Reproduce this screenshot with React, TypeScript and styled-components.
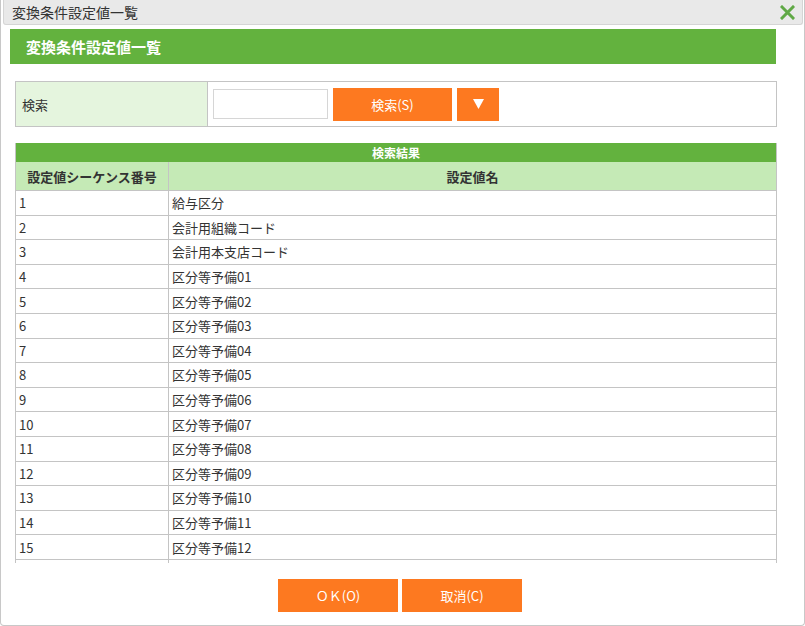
import React from "react";
import styled, { createGlobalStyle } from "styled-components";

const Global = createGlobalStyle`
  html, body { margin: 0; padding: 0; background: #fff; }
  body { font-family: "Noto Sans CJK JP", "Noto Sans", sans-serif; color: #333; }
  * { box-sizing: border-box; }
`;

const Dialog = styled.div`
  width: 805px;
  height: 626px;
  border: 1px solid #c8c8c8;
  border-top: none;
  border-radius: 0 0 4px 4px;
  padding: 0 1px;
  display: flex;
  flex-direction: column;
  overflow: hidden;
`;

const TitleBar = styled.div`
  height: 25px;
  margin-left: 1px;
  background: #e9e9e9;
  border: 1px solid #d5d5d5;
  border-top: none;
  border-radius: 0 0 3px 3px;
  display: flex;
  align-items: center;
  justify-content: space-between;
  padding: 0 6px 0 8px;
  font-size: 14px;
  color: #333;
`;

const CloseBtn = styled.span`
  display: flex;
  align-items: center;
  width: 16px;
  height: 16px;
`;

const Content = styled.div`
  flex: 1;
  padding: 4px 0 0 8px;
  display: flex;
  flex-direction: column;
`;

const PageHeader = styled.div`
  width: 766px;
  height: 35px;
  background: #63b23e;
  color: #fff;
  font-weight: bold;
  font-size: 15px;
  display: flex;
  align-items: center;
  padding-left: 16px;
`;

const SearchBox = styled.div`
  margin: 17px 0 0 5px;
  width: 762px;
  height: 46px;
  border: 1px solid #c4c4c4;
  display: grid;
  grid-template-columns: 192px 1fr;
`;

const SearchLabel = styled.div`
  background: #e5f5de;
  border-right: 1px solid #c4c4c4;
  display: flex;
  align-items: center;
  padding-left: 6px;
  font-size: 13px;
`;

const SearchCell = styled.div`
  display: flex;
  align-items: center;
  gap: 5px;
  padding-left: 5px;
`;

const TextInput = styled.input`
  width: 115px;
  height: 30px;
  border: 1px solid #d6d6d6;
  outline: none;
`;

const OrangeButton = styled.button<{ $w: number }>`
  width: ${(p) => p.$w}px;
  height: 33px;
  background: #fd7920;
  border: none;
  color: #fff;
  font-family: "Noto Sans CJK JP", "Noto Sans", sans-serif;
  font-size: 13px;
  display: flex;
  align-items: center;
  justify-content: center;
  padding: 0;
  cursor: pointer;
`;

const Results = styled.div`
  margin: 16px 0 0 5px;
  width: 762px;
  height: 420px;
  overflow: hidden;
  border-left: 1px solid #c4c4c4;
  border-right: 1px solid #c4c4c4;
`;

const ResultsTitle = styled.div`
  height: 19px;
  background: #63b23e;
  color: #fff;
  font-weight: bold;
  font-size: 12px;
  display: flex;
  align-items: center;
  justify-content: center;
`;

const Row = styled.div<{ $head?: boolean }>`
  display: grid;
  grid-template-columns: 153px 1fr;
  height: ${(p) => (p.$head ? "29px" : "24.6px")};
  border-bottom: 1px solid #c4c4c4;
  background: ${(p) => (p.$head ? "#c5eab6" : "#fff")};
  font-size: 13px;
  font-weight: ${(p) => (p.$head ? "bold" : "normal")};
`;

const Cell = styled.div<{ $head?: boolean; $first?: boolean }>`
  display: flex;
  align-items: center;
  justify-content: ${(p) => (p.$head ? "center" : "flex-start")};
  padding-left: ${(p) => (p.$head ? "0" : "3px")};
  border-right: ${(p) => (p.$first ? "1px solid #c4c4c4" : "none")};
  white-space: nowrap;
  overflow: hidden;
`;

const Footer = styled.div`
  display: flex;
  justify-content: center;
  gap: 4px;
  margin-top: 16px;
  padding-right: 13px;
`;

const rows: [string, string][] = [
  ["1", "給与区分"],
  ["2", "会計用組織コード"],
  ["3", "会計用本支店コード"],
  ["4", "区分等予備01"],
  ["5", "区分等予備02"],
  ["6", "区分等予備03"],
  ["7", "区分等予備04"],
  ["8", "区分等予備05"],
  ["9", "区分等予備06"],
  ["10", "区分等予備07"],
  ["11", "区分等予備08"],
  ["12", "区分等予備09"],
  ["13", "区分等予備10"],
  ["14", "区分等予備11"],
  ["15", "区分等予備12"],
  ["16", "区分等予備13"],
];

export default function App() {
  return (
    <>
      <Global />
      <Dialog>
        <TitleBar>
          <span>変換条件設定値一覧</span>
          <CloseBtn>
            <svg width="15" height="15" viewBox="0 0 15 15">
              <path d="M2 2 L13 13 M13 2 L2 13" stroke="#5fa845" strokeWidth="3" strokeLinecap="square" />
            </svg>
          </CloseBtn>
        </TitleBar>
        <Content>
          <PageHeader>変換条件設定値一覧</PageHeader>
          <SearchBox>
            <SearchLabel>検索</SearchLabel>
            <SearchCell>
              <TextInput />
              <OrangeButton $w={119}>検索(S)</OrangeButton>
              <OrangeButton $w={42}>
                <svg width="11" height="10" viewBox="0 0 11 10">
                  <path d="M0 0 H11 L5.5 10 Z" fill="#fff" />
                </svg>
              </OrangeButton>
            </SearchCell>
          </SearchBox>
          <Results>
            <ResultsTitle>検索結果</ResultsTitle>
            <Row $head>
              <Cell $head $first>設定値シーケンス番号</Cell>
              <Cell $head>設定値名</Cell>
            </Row>
            {rows.map(([n, name]) => (
              <Row key={n}>
                <Cell $first>{n}</Cell>
                <Cell>{name}</Cell>
              </Row>
            ))}
          </Results>
          <Footer>
            <OrangeButton $w={120}>ＯＫ(O)</OrangeButton>
            <OrangeButton $w={120}>取消(C)</OrangeButton>
          </Footer>
        </Content>
      </Dialog>
    </>
  );
}
